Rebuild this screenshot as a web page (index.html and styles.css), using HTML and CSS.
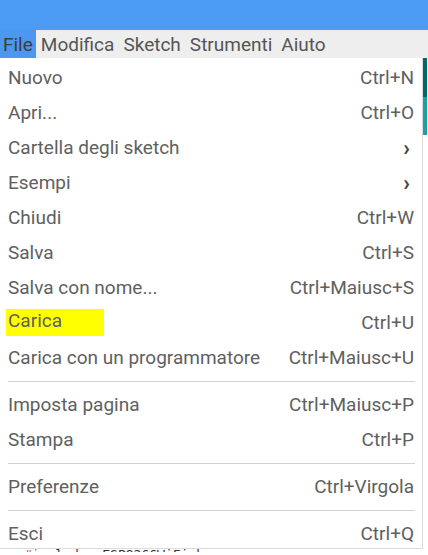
FILE: index.html
```html
<!DOCTYPE html>
<html lang="it">
<head>
<meta charset="utf-8">
<title>Arduino - File</title>
<link rel="stylesheet" href="styles.css">
</head>
<body>
<div class="titlebar"></div>
<div class="menubar">
  <span class="mb-item active">File</span>
  <span class="mb-item">Modifica</span>
  <span class="mb-item">Sketch</span>
  <span class="mb-item">Strumenti</span>
  <span class="mb-item">Aiuto</span>
</div>
<div class="main">
  <div class="menu">
    <div class="row"><span>Nuovo</span><span>Ctrl+N</span></div>
    <div class="row"><span>Apri...</span><span>Ctrl+O</span></div>
    <div class="row"><span>Cartella degli sketch</span><span class="arrow">&#8250;</span></div>
    <div class="row"><span>Esempi</span><span class="arrow">&#8250;</span></div>
    <div class="row"><span>Chiudi</span><span>Ctrl+W</span></div>
    <div class="row"><span>Salva</span><span>Ctrl+S</span></div>
    <div class="row"><span>Salva con nome...</span><span>Ctrl+Maiusc+S</span></div>
    <div class="row"><span class="hl">Carica</span><span>Ctrl+U</span></div>
    <div class="row"><span>Carica con un programmatore</span><span>Ctrl+Maiusc+U</span></div>
    <div class="sep"></div>
    <div class="row"><span>Imposta pagina</span><span>Ctrl+Maiusc+P</span></div>
    <div class="row"><span>Stampa</span><span>Ctrl+P</span></div>
    <div class="sep"></div>
    <div class="row"><span>Preferenze</span><span>Ctrl+Virgola</span></div>
    <div class="sep"></div>
    <div class="row"><span>Esci</span><span>Ctrl+Q</span></div>
  </div>
  <div class="side">
    <div class="side-dark"></div>
    <div class="side-light"></div>
  </div>
</div>
<div class="code"><span class="kw">#i</span><span class="tx">nclude &lt;ESP8266WiFi.h&gt;</span></div>
</body>
</html>
```
FILE: styles.css
```css
html, body {
  margin: 0;
  padding: 0;
  background: #ffffff;
  width: 428px;
  height: 555px;
  overflow: hidden;
  font-family: Roboto, "Liberation Sans", sans-serif;
}
.titlebar {
  height: 30px;
  background: #4b9bf5;
}
.menubar {
  height: 28px;
  background: #eeeeee;
  display: flex;
  align-items: center;
  font-size: 19px;
  color: #555555;
}
.mb-item {
  height: 28px;
  line-height: 29px;
  padding: 0 4px 0 5px;
}
.mb-item.active {
  background: #4d97f0;
  padding: 0 3px 0 3px;
  color: #3c3c46;
}
.main {
  display: flex;
}
.menu {
  width: 423px;
  border-right: 1px solid #dcdcdc;
  border-bottom: 1px solid #dcdcdc;
  padding: 2px 0 0 0;
  background: #ffffff;
  height: 491px;
  box-sizing: border-box;
}
.row {
  height: 35px;
  display: flex;
  justify-content: space-between;
  align-items: center;
  padding: 0 8px 0 8px;
  font-size: 19px;
  color: #606060;
}
.arrow {
  font-size: 22px;
  font-weight: bold;
  color: #444;
  padding-right: 4px;
}
.hl {
  background: #ffff00;
  padding: 0 42px 4px 2px;
  margin-left: -2px;
}
.sep {
  height: 1px;
  background: #d2d2d2;
  margin: 6px 7px 5px 8px;
}
.side {
  width: 4px;
  display: flex;
  flex-direction: column;
}
.side-dark {
  height: 39px;
  background: #00676b;
}
.side-light {
  height: 38px;
  background: #18a2a6;
}
.code {
  height: 4px;
  overflow: hidden;
  font-family: "DejaVu Sans Mono", monospace;
  font-size: 13px;
  line-height: 14px;
  padding-left: 24px;
  margin-top: -1px;
}
.code .kw { color: #d35400; }
.code .tx { color: #333; }
```
